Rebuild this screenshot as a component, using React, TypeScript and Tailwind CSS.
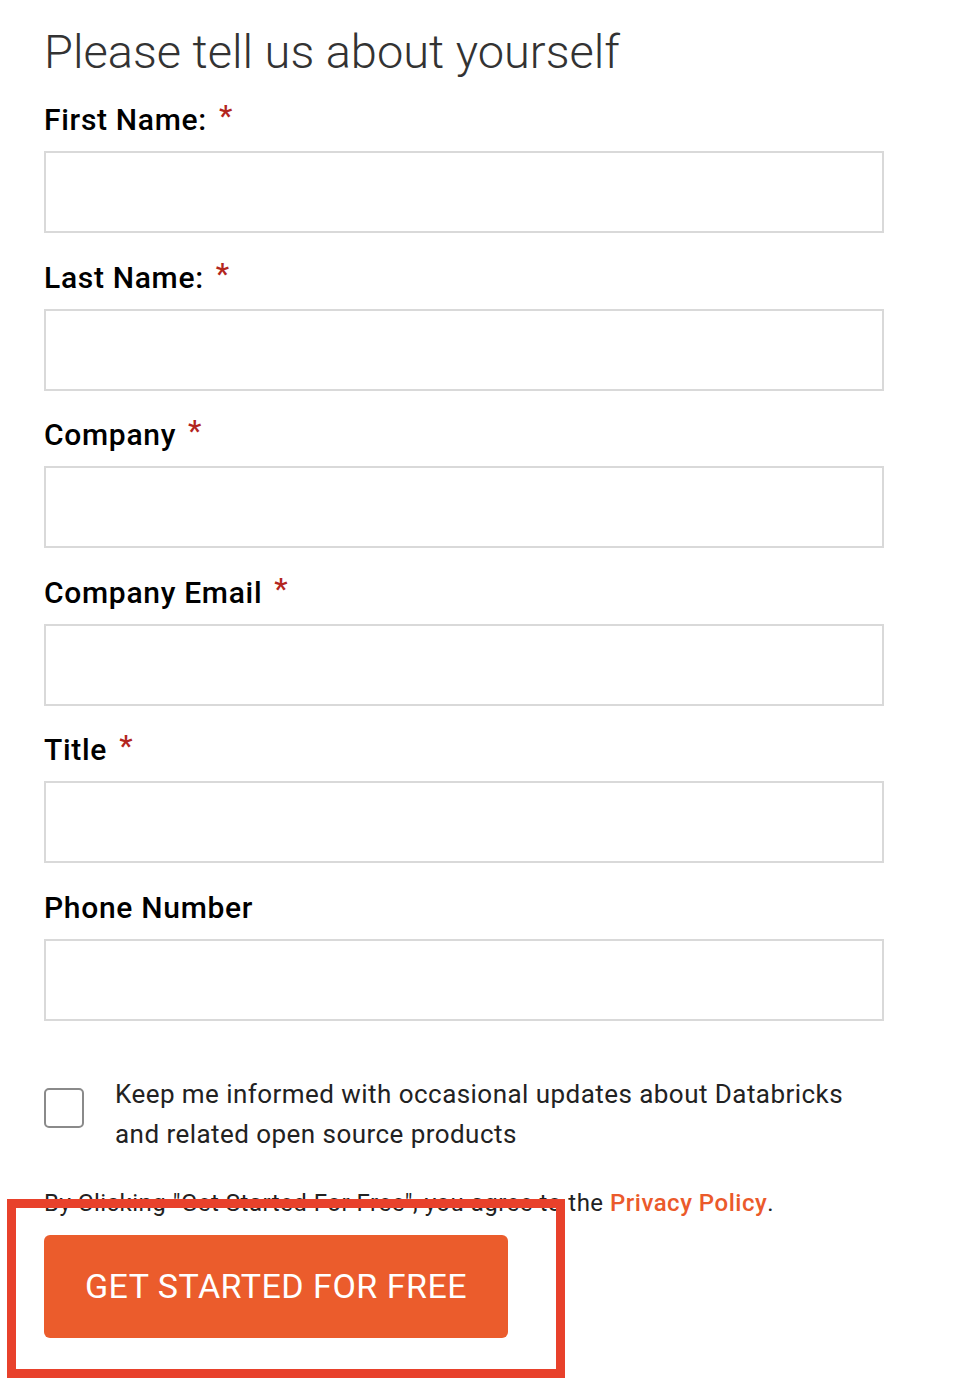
const fields = [
  { label: 'First Name:', required: true },
  { label: 'Last Name:', required: true },
  { label: 'Company', required: true },
  { label: 'Company Email', required: true },
  { label: 'Title', required: true },
  { label: 'Phone Number', required: false },
];

function Field({ label, required }: { label: string; required: boolean }) {
  return (
    <div className="mb-[29.5px]">
      <label className="flex items-start text-[30px] leading-[29px] tracking-[0.7px] font-medium text-black">
        {label}
        {required && <span className="ml-[12px] -mt-[4px] text-[#b3261e]">*</span>}
      </label>
      <input type="text" className="mt-[17px] block w-[840px] h-[82px] border-2 border-[#d9d9d9] bg-white outline-none" />
    </div>
  );
}

export default function App() {
  return (
    <div className="relative min-h-[1392px] bg-white font-['Roboto',sans-serif]">
      <div className="px-[44px] pt-[28px]">
        <h1 className="text-[47px] leading-[48px] font-light text-[#333]">Please tell us about yourself</h1>

        <form className="mt-[29px]" onSubmit={(e) => e.preventDefault()}>
          {fields.map((f) => (
            <Field key={f.label} {...f} />
          ))}

          <div className="mt-[53px] flex items-start">
            <input
              type="checkbox"
              className="mt-[14px] w-[40px] h-[40px] shrink-0 appearance-none rounded-[5px] border-2 border-[#8a8a8a] bg-white"
            />
            <p className="ml-[31px] text-[26px] leading-[40px] tracking-[0.45px] text-[#222]">
              Keep me informed with occasional updates about Databricks
              <br />
              and related open source products
            </p>
          </div>

          <p className="mt-[34px] text-[24px] leading-[30px] tracking-[0.5px] text-[#222]">
            By Clicking "Get Started For Free", you agree to the{' '}
            <a href="#" className="font-medium text-[#eb5a2b]">Privacy Policy</a>.
          </p>

          <button
            type="submit"
            className="mt-[17px] w-[464px] h-[103px] rounded-[6px] bg-[#eb5c2c] text-white text-[34px] tracking-[0.5px]"
          >
            GET STARTED FOR FREE
          </button>
        </form>
      </div>

      {/* annotation box */}
      <div className="pointer-events-none absolute left-[7px] top-[1199px] w-[558px] h-[179px] border-[9px] border-[#e8412b]" />
    </div>
  );
}
